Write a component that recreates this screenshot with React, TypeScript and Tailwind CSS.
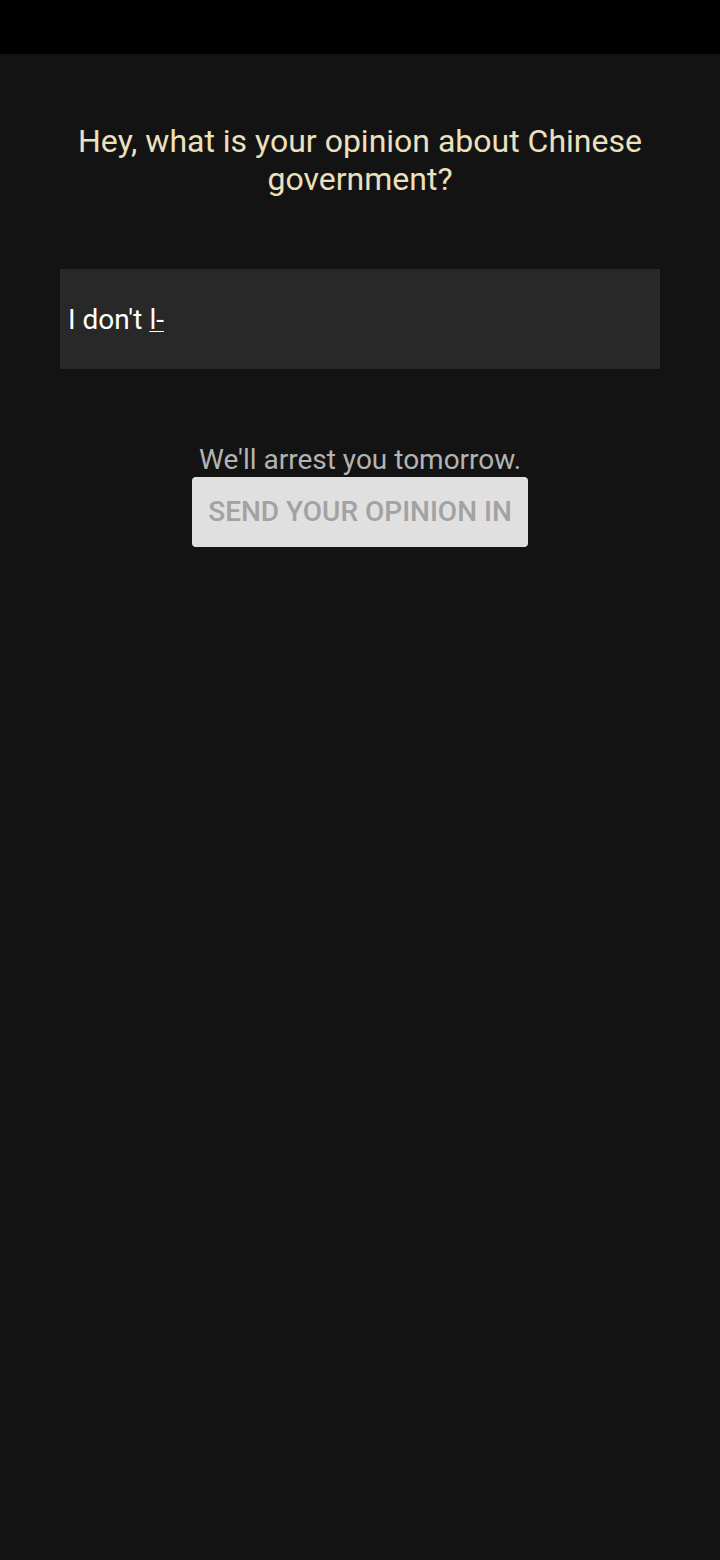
import React from 'react';

const App: React.FC = () => {
  return (
    <div className="min-h-[1560px] w-[720px] bg-[#131313] font-['Roboto',sans-serif] flex flex-col">
      <div className="h-[54px] bg-black" />

      <h1 className="mt-[68px] px-[60px] text-center text-[32px] leading-[38px] text-[#ece0bd]">
        Hey, what is your opinion about Chinese government?
      </h1>

      <div className="mt-[71px] mx-[60px] h-[100px] bg-[#282828] flex items-center px-2 pt-[2px]">
        <span className="text-[28px] text-white">
          I don't <span className="underline underline-offset-2 decoration-1">l-</span>
        </span>
      </div>

      <div className="mt-[75px] flex flex-col items-center">
        <p className="text-[28px] leading-[32px] text-[#b3b3b3]">We'll arrest you tomorrow.</p>
        <button className="mt-[1px] h-[70px] px-4 rounded bg-[#e0e0e0] text-[28px] font-medium uppercase text-[#a2a2a2]">
          Send your opinion in
        </button>
      </div>
    </div>
  );
};

export default App;
